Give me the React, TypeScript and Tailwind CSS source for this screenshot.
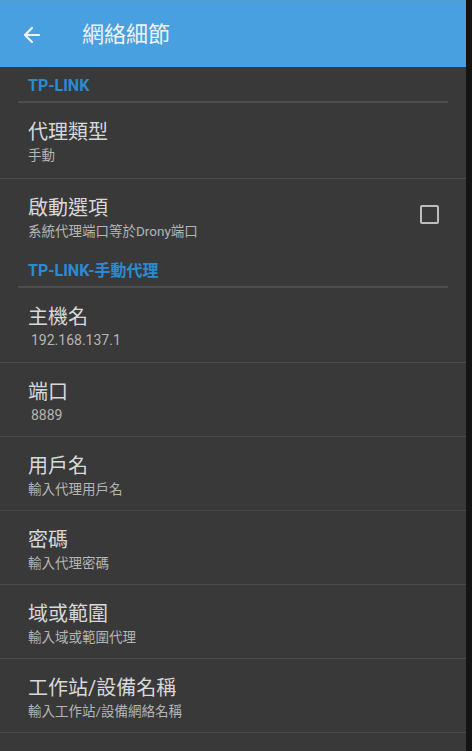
import { ArrowLeft } from 'lucide-react';

type Row = {
  title: string;
  sub: string;
  numeric?: boolean;
  checkbox?: boolean;
  h: string;
  border?: boolean;
};

const sections: { name: string; rows: Row[] }[] = [
  {
    name: 'TP-LINK',
    rows: [
      { title: '代理類型', sub: '手動', h: 'h-[76px]', border: true },
      { title: '啟動選項', sub: '系統代理端口等於Drony端口', checkbox: true, h: 'h-[73px]' },
    ],
  },
  {
    name: 'TP-LINK-手動代理',
    rows: [
      { title: '主機名', sub: '192.168.137.1', numeric: true, h: 'h-[75px]', border: true },
      { title: '端口', sub: '8889', numeric: true, h: 'h-[74px]', border: true },
      { title: '用戶名', sub: '輸入代理用戶名', h: 'h-[74px]', border: true },
      { title: '密碼', sub: '輸入代理密碼', h: 'h-[74px]', border: true },
      { title: '域或範圍', sub: '輸入域或範圍代理', h: 'h-[74px]', border: true },
      { title: '工作站/設備名稱', sub: '輸入工作站/設備網絡名稱', h: 'h-[74px]', border: true },
    ],
  },
];

const App = () => {
  return (
    <div
      className="w-[472px] h-[751px] overflow-hidden flex bg-[#141414]"
      style={{ fontFamily: 'Roboto, "Noto Sans CJK TC", sans-serif' }}
    >
      <div className="w-[466px] h-full flex flex-col bg-[#393939]">
        {/* app bar */}
        <div className="h-[3px] bg-[#4d9fd8]" />
        <div className="h-[64px] bg-[#48a0e0] flex items-center">
          <ArrowLeft size={24} strokeWidth={2.2} className="ml-[20px] text-[#f2f2f2]" />
          <span className="ml-[38px] text-[22px] leading-[28px] text-[#f2f2f2]">網絡細節</span>
        </div>

        {sections.map(section => (
          <div key={section.name}>
            <div className="pt-[8px]">
              <div className="px-[28px] text-[16px] leading-[22px] font-bold text-[#2a8bd3]">
                {section.name}
              </div>
              <div className="mt-[4px] mx-[18px] h-[2px] bg-[#4d4d4d]" />
            </div>
            {section.rows.map(row => (
              <div
                key={row.title}
                className={`${row.h} flex items-start justify-between pl-[28px] pr-[27px] ${
                  row.border ? 'border-b border-[#4a4a4a]' : ''
                }`}
              >
                <div className="pt-[16px] flex flex-col">
                  <span className="text-[20px] leading-[26px] text-[#d8d8d8]">{row.title}</span>
                  <span
                    className={`mt-[2px] leading-[17px] text-[#b5b5b5] ${
                      row.numeric ? 'pl-[3px] text-[14px]' : 'text-[13.5px]'
                    }`}
                  >
                    {row.sub}
                  </span>
                </div>
                {row.checkbox && (
                  <div className="mt-[26px] w-[19px] h-[19px] rounded-[2px] border-2 border-[#bdbdbd]" />
                )}
              </div>
            ))}
          </div>
        ))}
      </div>
    </div>
  );
};

export default App;
